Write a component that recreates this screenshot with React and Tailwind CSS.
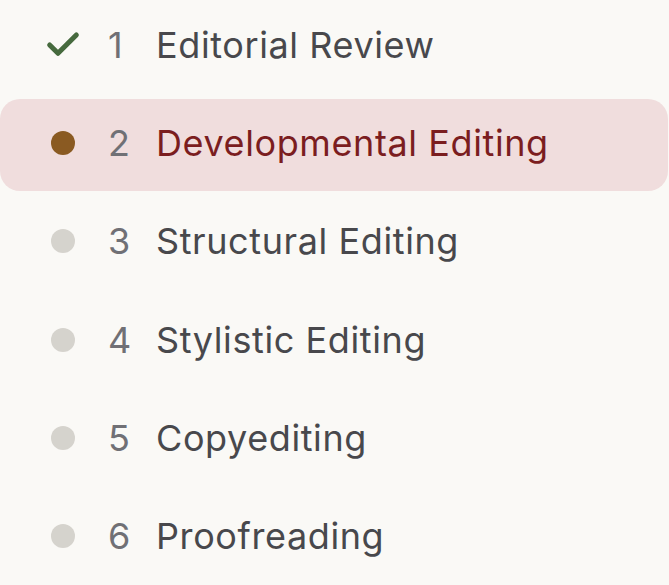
import React from "react";

const steps = [
  { n: 1, label: "Editorial Review", status: "done" },
  { n: 2, label: "Developmental Editing", status: "current" },
  { n: 3, label: "Structural Editing", status: "todo" },
  { n: 4, label: "Stylistic Editing", status: "todo" },
  { n: 5, label: "Copyediting", status: "todo" },
  { n: 6, label: "Proofreading", status: "todo" },
];

function Marker({ status }) {
  if (status === "done") {
    return (
      <svg width="40" height="40" viewBox="0 0 24 24" fill="none" stroke="#466a3e" strokeWidth="3" strokeLinecap="round" strokeLinejoin="round">
        <path d="M20 6 9 17l-5-5" />
      </svg>
    );
  }
  return (
    <span
      className={
        "block w-[24px] h-[24px] rounded-full " +
        (status === "current" ? "bg-[#8a5a22]" : "bg-[#d5d3cd]")
      }
    />
  );
}

export default function App() {
  return (
    <div className="w-[669px] h-[585px] overflow-hidden bg-[#faf9f6] font-['Inter',sans-serif]">
      <ul className="flex flex-col gap-[6.4px] mt-px pr-px">
        {steps.map((s) => {
          const active = s.status === "current";
          return (
            <li
              key={s.n}
              className={
                "flex items-center h-[92px] pb-[5px] rounded-[20px] " +
                (active ? "bg-[#f0dddd]" : "")
              }
            >
              <span className="w-[126px] flex items-center justify-center shrink-0">
                <Marker status={s.status} />
              </span>
              <span className="w-[48px] shrink-0 text-[36px] text-[#707075] -ml-[18px]">{s.n}</span>
              <span
                className={
                  "text-[36px] tracking-[0.6px] " +
                  (active ? "text-[#7b1d1f]" : "text-[#48484c]")
                }
              >
                {s.label}
              </span>
            </li>
          );
        })}
      </ul>
    </div>
  );
}
